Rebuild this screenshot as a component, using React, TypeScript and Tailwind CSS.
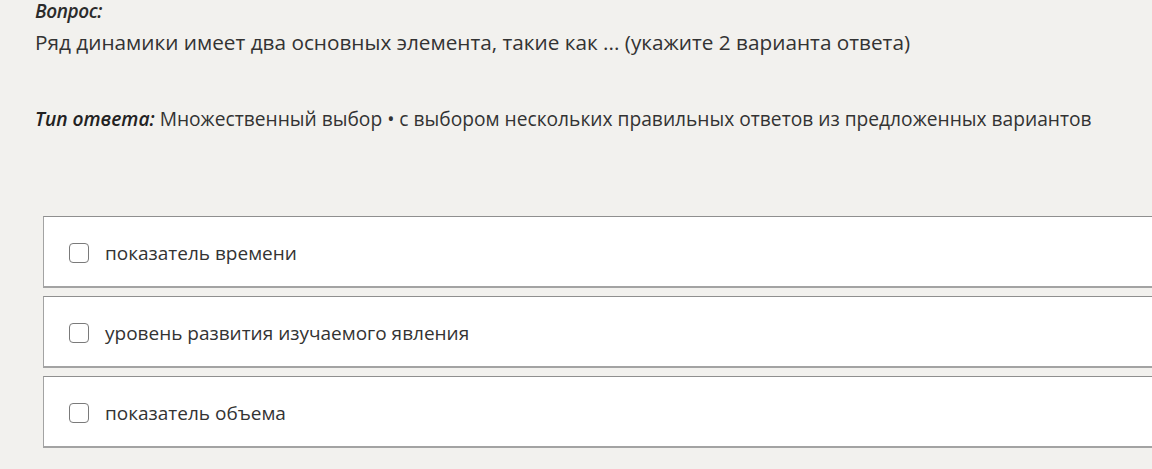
const options = [
  'показатель времени',
  'уровень развития изучаемого явления',
  'показатель объема',
];

const App = () => {
  return (
    <div
      className="h-[469px] w-[1152px] overflow-hidden bg-[#f2f1ee] text-[#333333]"
      style={{ fontFamily: '"Open Sans", "Noto Sans", sans-serif' }}
    >
      <div className="pl-[35px]">
        <div className="text-[19px] leading-[22px] italic font-semibold tracking-[-0.4px] text-[#2b2b2b]">
          Вопрос:
        </div>
        <p className="mt-[8px] text-[20.75px] leading-[24px]">
          Ряд динамики имеет два основных элемента, такие как ... (укажите 2 варианта ответа)
        </p>
        <p className="mt-[54px] text-[19.2px] leading-[22px]">
          <span className="italic font-semibold text-[#222222]">Тип ответа:</span>{' '}
          Множественный выбор • с выбором нескольких правильных ответов из предложенных вариантов
        </p>
      </div>

      <div className="mt-[86px] ml-[43px] flex w-[1200px] flex-col gap-[8px]">
        {options.map((label) => (
          <label
            key={label}
            className="flex h-[72px] items-center gap-[16px] border border-b-2 border-[#a3a3a3] border-t-[#8f8f8f] bg-white pt-[2px] pl-[25px]"
          >
            <span className="h-[20px] w-[20px] rounded-[4px] border-[1.5px] border-[#7a7a7a] bg-white" />
            <span className="text-[19px] leading-[22px] text-[#333333]">{label}</span>
          </label>
        ))}
      </div>
    </div>
  );
};

export default App;
